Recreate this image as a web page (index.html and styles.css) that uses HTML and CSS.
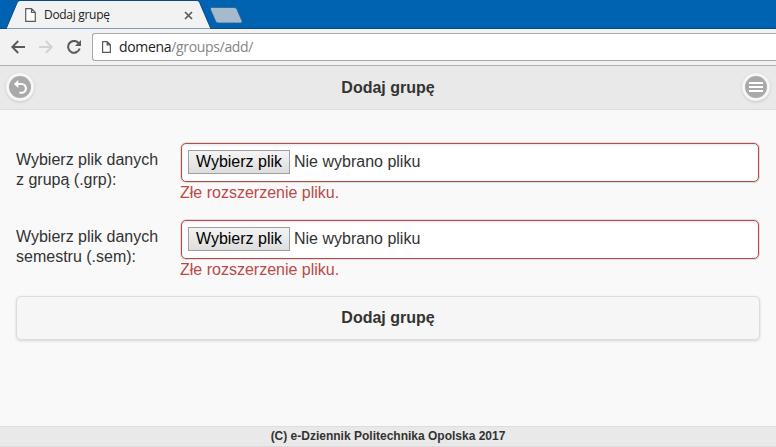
FILE: index.html
```html
<!DOCTYPE html>
<html lang="pl">
<head>
<meta charset="utf-8">
<title>Dodaj grupę</title>
<link rel="stylesheet" href="styles.css">
</head>
<body>
<div class="tabstrip">
  <svg class="tab-shape" width="250" height="29" viewBox="0 0 250 29">
    <path d="M6 29 L17.2 2.5 Q18.2 .5 20 .5 H197 Q198.800 .5 199.600 2.500 L211 29Z" fill="#f2f2f2" stroke="#064a86"/>
    <path d="M211.500 7.500 H234 Q236 7.500 236.800 9 L242 21 Q242.500 23 240.500 23 H218.500 Q216.500 23 215.800 21.500 L210.500 9.500 Q210 7.500 211.500 7.500Z" fill="#a5bacc" stroke="#2a6295" stroke-width=".8"/>
  </svg>
  <div class="tab">
    <svg class="page-icon" width="11" height="14" viewBox="0 0 11 14"><path d="M.7.7H6.500L10.300 4.500V13.300H.7Z M6.500.7V4.500H10.300" fill="#fff" stroke="#5a5a5a" stroke-width="1.200"/></svg>
    <span class="tab-title">Dodaj grupę</span>
    <svg class="tab-close" width="9" height="9" viewBox="0 0 9 9"><path d="M1 1L8 8M8 1L1 8" stroke="#5a5a5a" stroke-width="1.700"/></svg>
  </div>
</div>
<div class="toolbar">
  <svg width="14" height="14" viewBox="0 0 14 14"><path d="M14 7H1.500M7.200 1L1.300 7L7.200 13" fill="none" stroke="#5a5a5a" stroke-width="1.900"/></svg>
  <svg width="14" height="14" viewBox="0 0 14 14"><path d="M0 7H12.500M6.800 1L12.700 7L6.800 13" fill="none" stroke="#d2d2d2" stroke-width="1.900"/></svg>
  <svg width="14" height="14" viewBox="0 0 14 14"><path d="M11.700 3.200A5.900 5.900 0 1 0 12.700 8.500" fill="none" stroke="#5a5a5a" stroke-width="2"/><path d="M14 0V6H8Z" fill="#5a5a5a"/></svg>
  <div class="address">
    <svg width="9" height="12" viewBox="0 0 9 12"><path d="M.6.6H5.200L8.400 3.800V11.400H.6Z M5.200.6V3.800H8.400" fill="none" stroke="#5a5a5a" stroke-width="1.200"/></svg>
    <span class="url"><span class="host">domena</span>/groups/add/</span>
  </div>
</div>
<header class="header">
  <a class="round"><svg width="22" height="22" viewBox="0 0 22 22"><circle cx="11" cy="11" r="11" fill="#a9a9a9"/><path d="M8 8H12.500A4.400 4.400 0 0 1 12.500 16.800H10.500" fill="none" stroke="#fff" stroke-width="2.100"/><path d="M4.800 8L9.300 4V12Z" fill="#fff"/></svg></a>
  <h1>Dodaj grupę</h1>
  <a class="round"><svg width="22" height="22" viewBox="0 0 22 22"><circle cx="11" cy="11" r="11" fill="#a9a9a9"/><path d="M4 7H18M4 11H18M4 15H18" stroke="#fff" stroke-width="2"/></svg></a>
</header>
<main class="content">
  <div class="row">
    <div class="label">Wybierz plik danych<br>z grupą (.grp):</div>
    <div class="control">
      <div class="field"><button class="choose">Wybierz plik</button><span>Nie wybrano pliku</span></div>
      <div class="error">Złe rozszerzenie pliku.</div>
    </div>
  </div>
  <div class="row">
    <div class="label">Wybierz plik danych<br>semestru (.sem):</div>
    <div class="control">
      <div class="field"><button class="choose">Wybierz plik</button><span>Nie wybrano pliku</span></div>
      <div class="error">Złe rozszerzenie pliku.</div>
    </div>
  </div>
  <button class="submit">Dodaj grupę</button>
</main>
<footer class="footer">(C) e-Dziennik Politechnika Opolska 2017</footer>
</body>
</html>
```
FILE: styles.css
```css
* { box-sizing: border-box; }
body {
  margin: 0;
  height: 447px;
  overflow: hidden;
  display: flex;
  flex-direction: column;
  background: #f9f9f9;
  color: #333;
  font: 16px/20px "Liberation Sans", Arial, sans-serif;
}
svg { display: block; flex: none; }
.tabstrip {
  position: relative;
  flex: none;
  height: 29px;
  background: #0063b1;
  border-bottom: 1px solid #064a86;
}
.tab-shape { position: absolute; left: 0; top: 0; }
.tab {
  position: relative;
  display: flex;
  align-items: center;
  width: 193px;
  height: 29px;
  padding: 1px 0 0 25px;
}
.tab-title {
  flex: 1;
  margin-left: 8px;
  color: #222;
  font: 12px/16px "Open Sans", sans-serif;
  letter-spacing: -.3px;
}
.toolbar {
  flex: none;
  display: flex;
  align-items: center;
  gap: 14px;
  height: 37px;
  padding-left: 11px;
  background: #f2f2f2;
  border-bottom: 1px solid #b3b1b3;
}
.address {
  flex: 1;
  display: flex;
  align-items: center;
  gap: 8px;
  height: 28px;
  margin-left: -3px;
  padding-left: 9px;
  background: #fff;
  border: 1px solid #a9a9a9;
  border-right: 0;
  border-radius: 3px 0 0 3px;
}
.url {
  color: #858585;
  font: 14px/18px "Open Sans", sans-serif;
  letter-spacing: -.33px;
}
.host { color: #222; }
.header {
  flex: none;
  display: flex;
  align-items: center;
  justify-content: space-between;
  height: 44px;
  padding: 0 6px;
  background: #e9e9e9;
  border-bottom: 1px solid #ddd;
}
.header h1 {
  margin: 0;
  font-size: 16px;
  line-height: 20px;
}
.round {
  margin-bottom: 1px;
  padding: 3px;
  border-radius: 50%;
  background: #f6f6f6;
  box-shadow: 0 1px 3px rgba(0, 0, 0, .15);
}
.content {
  flex: 1;
  padding: 33px 16px 0;
}
.row {
  display: flex;
  height: 77px;
}
.label {
  width: 165px;
  padding-top: 7px;
}
.control { flex: 1; }
.field {
  display: flex;
  align-items: center;
  gap: 4px;
  height: 39px;
  margin-right: 1px;
  padding: 0 0 2px 6px;
  background: #fff;
  border: 1px solid #b94a48;
  border-radius: 5px;
  box-shadow: 0 0 0 1px #ddd, inset 0 1px 3px rgba(0, 0, 0, .1);
}
.choose {
  width: 102px;
  height: 24px;
  padding: 0;
  border: 1px solid #a0a0a0;
  background: linear-gradient(#f4f4f4, #ddd);
  color: #000;
  font: inherit;
}
.error {
  margin: 1px 0 0 -1px;
  color: #b94a48;
}
.submit {
  display: block;
  width: 100%;
  height: 44px;
  margin-top: -1px;
  padding: 0 0 1px;
  border: 1px solid #ddd;
  border-radius: 5px;
  background: #f6f6f6;
  box-shadow: 0 1px 3px rgba(0, 0, 0, .15);
  color: #333;
  font: bold 16px/20px "Liberation Sans", Arial, sans-serif;
}
.footer {
  flex: none;
  height: 21px;
  border: solid #ddd;
  border-width: 1px 0;
  background: #e9e9e9;
  text-align: center;
  font-size: 12px;
  font-weight: bold;
  line-height: 18px;
}
```
